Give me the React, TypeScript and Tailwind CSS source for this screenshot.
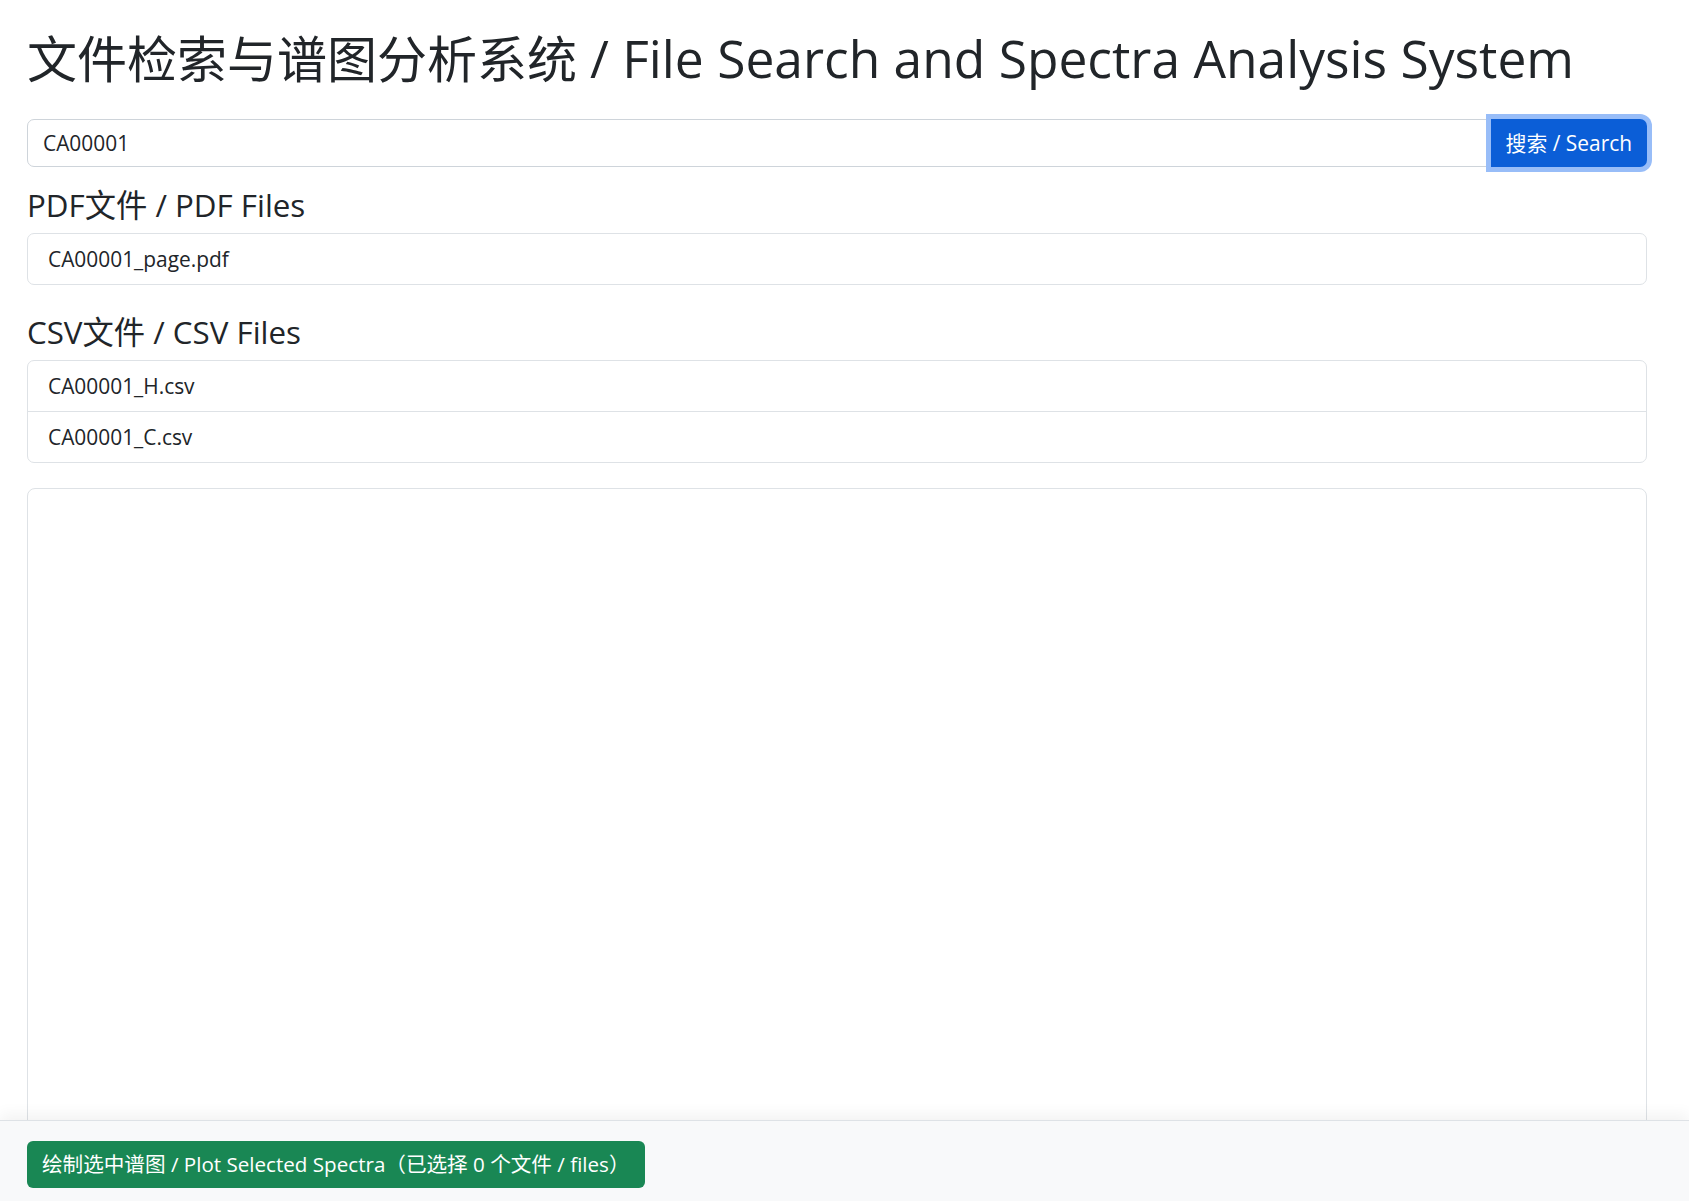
import React from 'react';

const pdfFiles = ['CA00001_page.pdf'];
const csvFiles = ['CA00001_H.csv', 'CA00001_C.csv'];

const FileList: React.FC<{ files: string[] }> = ({ files }) => (
  <ul className="flex flex-col rounded-[7px] border border-[#dee2e6] bg-white">
    {files.map((f, i) => (
      <li
        key={f}
        className={
          i > 0
            ? 'border-t border-[#dee2e6] px-5 py-[10px] text-[20.9px] leading-[30px]'
            : 'px-5 py-[10px] text-[20.9px] leading-[30px]'
        }
      >
        {f}
      </li>
    ))}
  </ul>
);

const App: React.FC = () => {
  return (
    <div className="min-h-screen bg-white text-[#212529] font-['Open_Sans','Noto_Sans_CJK_SC',sans-serif]">
      <div className="pl-[27px] pr-[42px] pt-[29px]">
        <h1 className="mb-[30px] h-[60px] text-[50px] font-normal leading-[60px]">
          文件检索与谱图分析系统 <span className="text-[51.5px] leading-[40px]">/ File Search and Spectra Analysis System</span>
        </h1>

        <div className="mb-5 flex">
          <input
            value="CA00001"
            readOnly
            className="h-[47.5px] flex-1 rounded-l-[7px] border border-[#ced4da] px-[15px] text-[20.9px] text-[#212529] outline-none"
          />
          <button className="relative z-10 rounded-r-[7px] bg-[#0b5ed7] px-[15px] text-[20.9px] leading-[30px] text-white ring-[5px] ring-[#98bdf8]">
            搜索 / Search
          </button>
        </div>

        <h4 className="mb-[10px] text-[31.3px] font-normal leading-[36px]">PDF文件 / PDF Files</h4>
        <FileList files={pdfFiles} />

        <h4 className="mb-[10px] mt-[29px] text-[31.3px] font-normal leading-[36px]">CSV文件 / CSV Files</h4>
        <FileList files={csvFiles} />

        {/* plot area */}
        <div className="mt-[25px] h-[700px] rounded-[8px] border border-[#dee2e6] bg-white" />
      </div>

      <footer className="fixed bottom-0 left-0 right-0 border-t border-[#dee2e6] bg-[#f8f9fa] pb-[13px] pl-[27px] pt-[20px] shadow-[0_-6px_14px_rgba(0,0,0,0.05)]">
        <button className="h-[47px] rounded-[6px] bg-[#198754] px-[15px] text-[20.6px] text-white">
          绘制选中谱图 / Plot Selected Spectra（已选择 0 个文件 / files）
        </button>
      </footer>
    </div>
  );
};

export default App;
